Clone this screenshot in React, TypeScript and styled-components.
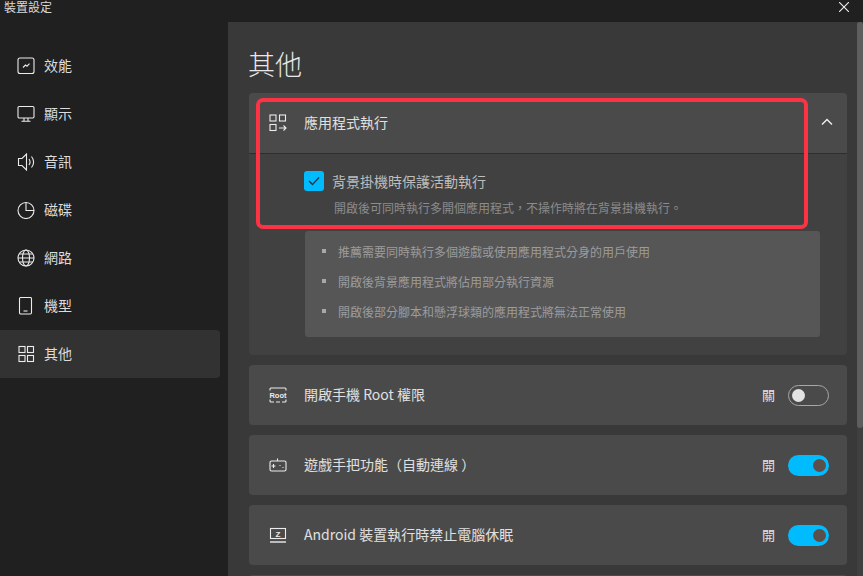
import React from 'react';
import styled, { createGlobalStyle } from 'styled-components';

const Global = createGlobalStyle`
  html, body { margin: 0; padding: 0; background: #202020; }
  body {
    font-family: "Noto Sans CJK TC", "Noto Sans", "Liberation Sans", sans-serif;
    text-spacing-trim: space-all;
  }
  * { box-sizing: border-box; }
`;

const Page = styled.div`
  width: 863px;
  height: 576px;
  overflow: hidden;
  display: flex;
  flex-direction: column;
  background: #202020;
  color: #e6e6e6;
`;
const TitleBar = styled.header`
  height: 22px;
  flex: none;
  display: flex;
  justify-content: space-between;
  align-items: flex-start;
  padding: 0 14px 0 4px;
`;
const TitleText = styled.span`
  font-size: 12px;
  line-height: 13px;
  color: #d8d8d8;
`;
const CloseIcon = styled.svg`
  width: 10px;
  height: 10px;
  margin-top: 2px;
  stroke: #f0f0f0;
  stroke-width: 1.1;
  fill: none;
`;
const Body = styled.div`
  flex: 1;
  min-height: 0;
  display: flex;
`;
const Sidebar = styled.nav`
  width: 228px;
  flex: none;
  padding: 20px 8px 0 0;
  display: flex;
  flex-direction: column;
`;
const NavItem = styled.div<{ $active?: boolean }>`
  height: 48px;
  display: flex;
  align-items: center;
  gap: 9px;
  padding-left: 17px;
  font-size: 14px;
  color: #dcdcdc;
  border-radius: 0 4px 4px 0;
  background: ${p => (p.$active ? '#323232' : 'transparent')};
`;
const NavLabel = styled.span`
  margin-bottom: 2px;
`;
const Icon = styled.svg`
  width: 18px;
  height: 18px;
  flex: none;
  fill: none;
  stroke: #ececec;
  stroke-width: 1.1;
`;
const Main = styled.main`
  flex: 1;
  min-width: 0;
  padding: 0 10px 0 21px;
  overflow: hidden;
  background: #393939;
`;
const Heading = styled.h1`
  margin: 22px 0 9px -1px;
  font-size: 27px;
  line-height: 40px;
  font-weight: 300;
  color: #e8e8e8;
`;
const Stack = styled.div`
  display: flex;
  flex-direction: column;
  gap: 10px;
`;
const Card = styled.section`
  position: relative;
  background: #414141;
  border-radius: 4px;
  flex: none;
`;
const CardHeader = styled.div`
  height: 61px;
  display: flex;
  align-items: center;
  padding: 0 14px 0 20px;
  background: #4a4a4a;
  border-radius: 4px 4px 0 0;
  border-bottom: 1px solid #2e2e2e;
`;
const Row = styled(CardHeader)`
  height: 60px;
  flex: none;
  border-bottom: 0;
  border-radius: 4px;
  padding-right: 18px;
`;
const RowLabel = styled.span`
  margin: 0 0 2px 17px;
  flex: 1;
  font-size: 14px;
  color: #e0e0e0;
`;
const State = styled.span`
  font-size: 13px;
  color: #e4e4e4;
  margin: 0 13px 2px 0;
`;
const Toggle = styled.span<{ $on?: boolean }>`
  width: 41px;
  height: 21px;
  border-radius: 11px;
  display: flex;
  align-items: center;
  padding: 0 3px;
  justify-content: ${p => (p.$on ? 'flex-end' : 'flex-start')};
  background: ${p => (p.$on ? '#00bcff' : 'transparent')};
  border: ${p => (p.$on ? '0' : '1px solid #a8a8a8')};
`;
const Knob = styled.span<{ $on?: boolean }>`
  width: 13px;
  height: 13px;
  border-radius: 50%;
  background: ${p => (p.$on ? '#5a4f4a' : '#e2e2e2')};
`;
const Chevron = styled.svg`
  width: 12px;
  height: 8px;
  margin-bottom: 2px;
  fill: none;
  stroke: #f0f0f0;
  stroke-width: 1.4;
`;
const CardBody = styled.div`
  padding: 17px 27px 18px 55px;
`;
const CheckRow = styled.div`
  display: flex;
  align-items: center;
  gap: 8px;
`;
const CheckBox = styled.span`
  width: 20px;
  height: 20px;
  border-radius: 3px;
  background: #00bcff;
  display: flex;
  align-items: center;
  justify-content: center;
`;
const CheckLabel = styled.span`
  font-size: 14px;
  line-height: 20px;
  color: #bdbdbd;
`;
const Hint = styled.p`
  margin: 8px 0 15px 30px;
  font-size: 12px;
  line-height: 17px;
  color: #8c8c8c;
`;
const InfoBox = styled.ul`
  margin: 0 0 0 1px;
  height: 106px;
  padding: 5px 0 0 17px;
  list-style: none;
  background: #565656;
  border-radius: 3px;
  display: flex;
  flex-direction: column;
`;
const InfoItem = styled.li`
  height: 30px;
  display: flex;
  align-items: center;
  gap: 12px;
  font-size: 12px;
  color: #9c9c9c;
  &::before {
    content: "";
    width: 4px;
    height: 4px;
    background: #a8a8a8;
    flex: none;
  }
`;
const Highlight = styled.div`
  position: absolute;
  left: 7px;
  top: 5px;
  width: 552px;
  height: 131px;
  border: 4px solid #fb3345;
  border-radius: 7px;
  pointer-events: none;
`;
const ScrollTrack = styled.div`
  width: 6px;
  flex: none;
  background: #3f3f3f;
`;
const ScrollThumb = styled.div`
  width: 6px;
  height: 406px;
  border-radius: 3px;
  background: #5e5e5e;
`;

const navIcons: Record<string, React.ReactNode> = {
  perf: <><rect x="1" y="1" width="16" height="15.500" rx="2" /><path d="M6 10.500l2.500-2.500 1.500 1.200 2.500-2.500" /></>,
  display: <><rect x="1" y="1.500" width="16" height="11.500" rx="1.200" /><path d="M7 13v3M11 13v3M4.500 16.200h9" /></>,
  audio: <><path d="M1.500 5.500h3.500L9.500 1v16L5 12.500H1.500z" /><path d="M12 6c1.400 2 1.400 4 0 6M14.500 3.500c2.700 3.500 2.700 7.500 0 11" /></>,
  disk: <><circle cx="9" cy="9.500" r="8" /><path d="M9 1.500v8h8" /></>,
  net: <><circle cx="9" cy="9" r="8" /><ellipse cx="9" cy="9" rx="3.500" ry="8" /><path d="M1 9h16M2.200 5h13.600M2.200 13h13.600" /></>,
  model: <><rect x="2.500" y="0.500" width="12" height="16.500" rx="1.200" /><path d="M6.500 14h4" /></>,
  other: <><rect x="2" y="1.500" width="6" height="6" /><rect x="10.500" y="1.500" width="6" height="6" /><rect x="2" y="10.500" width="6" height="6" /><rect x="10.500" y="10.500" width="6" height="6" /></>,
};

const navItems: [string, string][] = [
  ['perf', '效能'], ['display', '顯示'], ['audio', '音訊'], ['disk', '磁碟'],
  ['net', '網路'], ['model', '機型'], ['other', '其他'],
];

const RootIcon = () => (
  <Icon viewBox="0 0 18 18">
    <path d="M1 4.500V3a1 1 0 0 1 1-1h14a1 1 0 0 1 1 1v1.500M1 13.500V15a1 1 0 0 0 1 1h3M13 16h3a1 1 0 0 0 1-1v-1.500M7 16h4" />
    <text x="9" y="11.500" textAnchor="middle" fontSize="7.500" fontWeight="700" fill="#ececec" stroke="none" fontFamily="Liberation Sans, sans-serif">Root</text>
  </Icon>
);
const PadIcon = () => (
  <Icon viewBox="0 0 18 18">
    <rect x="1" y="5" width="16" height="10" rx="1.500" />
    <path d="M8.500 5V2.500M2.500 10h4M4.500 8v4M10.500 9.500h1M13.500 11.500h1" />
  </Icon>
);
const SleepIcon = () => (
  <Icon viewBox="0 0 18 18">
    <rect x="1.500" y="2.500" width="15" height="10" />
    <path d="M1 16h16" strokeWidth="1.400" />
    <text x="9" y="10.500" textAnchor="middle" fontSize="8" fontWeight="700" fill="#ececec" stroke="none" fontFamily="Liberation Sans, sans-serif">Z</text>
  </Icon>
);
const AppsIcon = () => (
  <Icon viewBox="0 0 18 18">
    <rect x="1" y="1" width="6" height="6" />
    <rect x="10.500" y="1" width="6" height="6" />
    <rect x="1" y="10.500" width="6" height="6" />
    <path d="M10 14h7M14.500 11.500l2.500 2.500-2.500 2.500" />
  </Icon>
);

export default function App() {
  return (
    <Page>
      <Global />
      <TitleBar>
        <TitleText>裝置設定</TitleText>
        <CloseIcon viewBox="0 0 10 10"><path d="M0 0l10 10M10 0L0 10" /></CloseIcon>
      </TitleBar>
      <Body>
        <Sidebar>
          {navItems.map(([k, label]) => (
            <NavItem key={k} $active={k === 'other'}>
              <Icon viewBox="0 0 18 18">{navIcons[k]}</Icon>
              <NavLabel>{label}</NavLabel>
            </NavItem>
          ))}
        </Sidebar>
        <Main>
          <Heading>其他</Heading>
          <Stack>
            <Card>
              <CardHeader>
                <AppsIcon />
                <RowLabel>應用程式執行</RowLabel>
                <Chevron viewBox="0 0 12 8"><path d="M1 6.500l5-5 5 5" /></Chevron>
              </CardHeader>
              <CardBody>
                <CheckRow>
                  <CheckBox>
                    <svg width="12" height="10" viewBox="0 0 12 10" fill="none" stroke="#123a4a" strokeWidth="1.500"><path d="M1 5l3.500 3.500L11 1.500" /></svg>
                  </CheckBox>
                  <CheckLabel>背景掛機時保護活動執行</CheckLabel>
                </CheckRow>
                <Hint>開啟後可同時執行多開個應用程式，不操作時將在背景掛機執行。</Hint>
                <InfoBox>
                  <InfoItem>推薦需要同時執行多個遊戲或使用應用程式分身的用戶使用</InfoItem>
                  <InfoItem>開啟後背景應用程式將佔用部分執行資源</InfoItem>
                  <InfoItem>開啟後部分腳本和懸浮球類的應用程式將無法正常使用</InfoItem>
                </InfoBox>
              </CardBody>
              <Highlight />
            </Card>
            <Row>
              <RootIcon />
              <RowLabel>開啟手機 Root 權限</RowLabel>
              <State>關</State>
              <Toggle><Knob /></Toggle>
            </Row>
            <Row>
              <PadIcon />
              <RowLabel>遊戲手把功能（自動連線 ）</RowLabel>
              <State>開</State>
              <Toggle $on><Knob $on /></Toggle>
            </Row>
            <Row>
              <SleepIcon />
              <RowLabel>Android 裝置執行時禁止電腦休眠</RowLabel>
              <State>開</State>
              <Toggle $on><Knob $on /></Toggle>
            </Row>
            <Row />
          </Stack>
        </Main>
        <ScrollTrack><ScrollThumb /></ScrollTrack>
      </Body>
    </Page>
  );
}
